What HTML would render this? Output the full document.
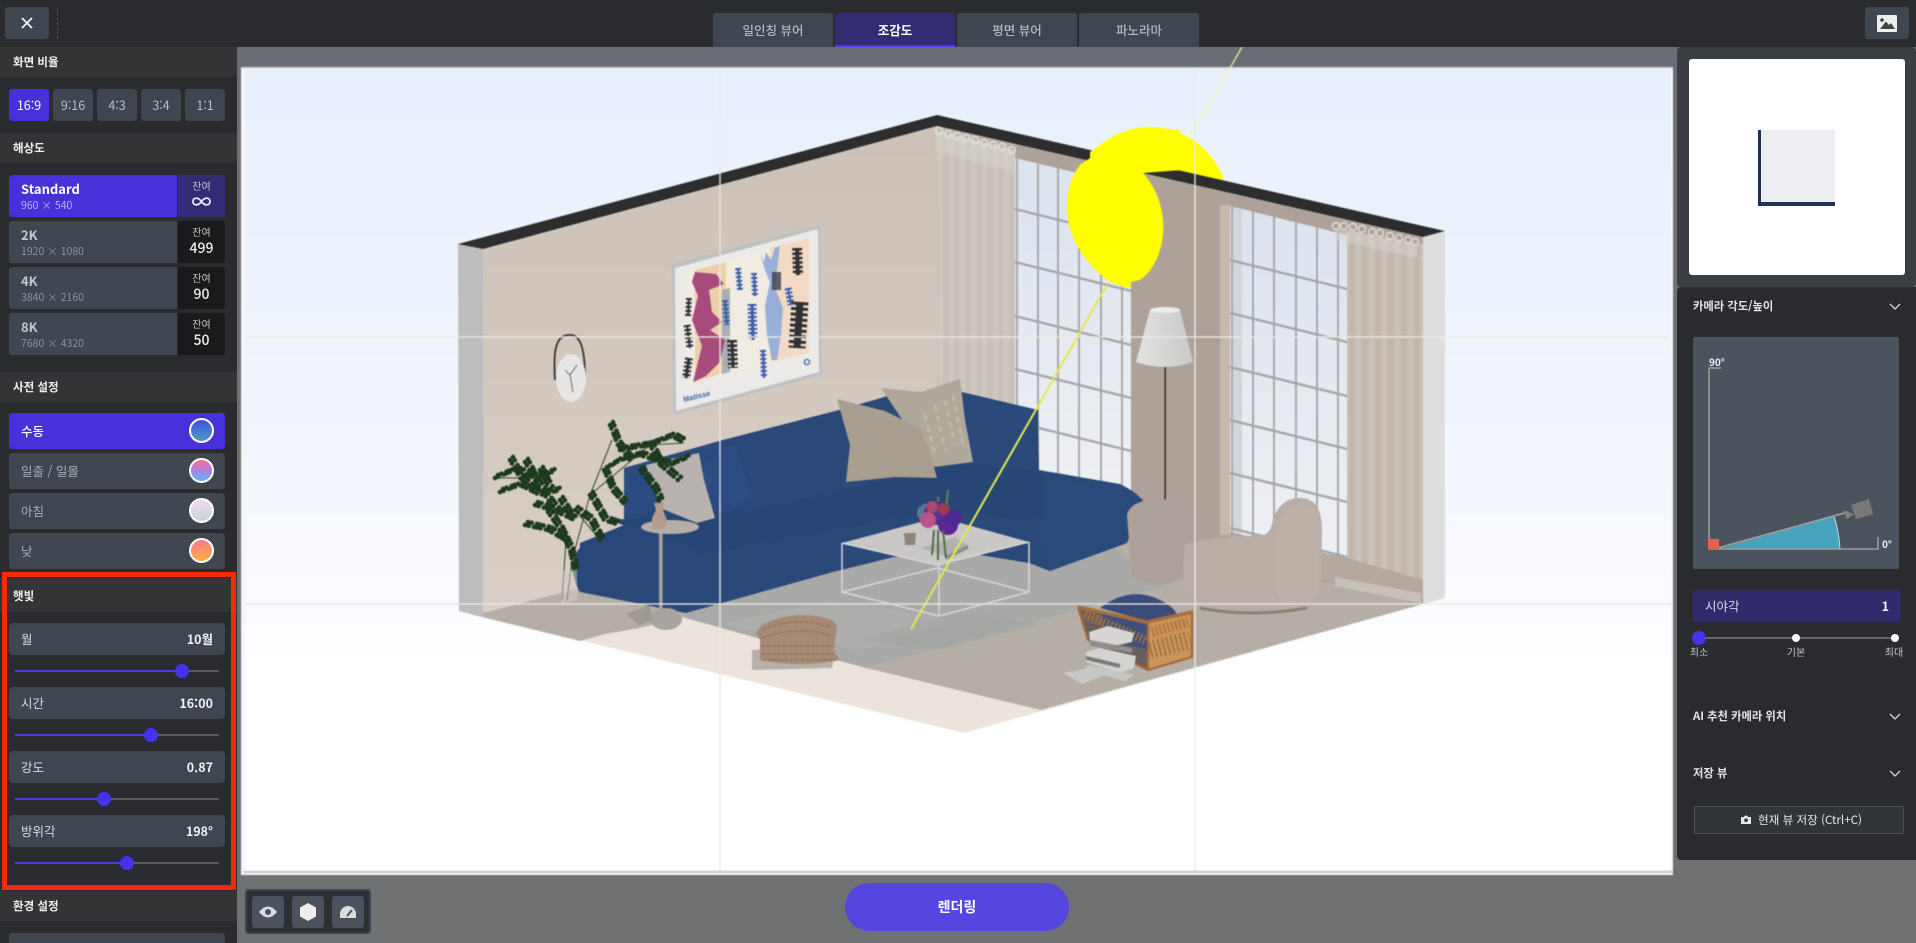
<!DOCTYPE html>
<html lang="ko">
<head>
<meta charset="utf-8">
<title>렌더링</title>
<style>
*{box-sizing:border-box}
html,body{margin:0;padding:0;width:1916px;height:943px;overflow:hidden;background:#6e7073}
body{font-family:"Noto Sans CJK KR","Liberation Sans",sans-serif;position:relative;color:#fff}
.a{position:absolute}
.btn{position:absolute;background:#3f4650;border-radius:3px;display:flex;align-items:center;justify-content:center}
.hd{position:absolute;left:0;width:237px;height:30px;background:#333436;font-size:11.5px;font-weight:700;color:#eee;line-height:30px;padding-left:13px}
.ratio{position:absolute;top:89px;width:40px;height:32px;background:#3f4650;border-radius:3px;color:#b9bdc3;font-size:12.5px;line-height:32px;text-align:center}
.on{background:#4632d8;color:#fff}
.resl{position:absolute;left:9px;width:168px;height:42px;background:#3f4650;border-radius:3px 0 0 3px;padding:5px 0 0 12px}
.resl b{display:block;font-size:13px;line-height:17px;color:#c3c6cb;font-weight:700}
.resl span{display:block;font-size:10.5px;line-height:17px;color:#8d929a}
.resr{position:absolute;left:178px;width:47px;height:42px;background:#191a1c;border-radius:0 3px 3px 0;text-align:center}
.resr i{display:block;font-style:normal;font-size:10px;line-height:12px;padding-top:5px;color:#c2c4c8}
.resr b{display:block;font-weight:500;font-size:14px;line-height:20px;color:#eee}
.pre{position:absolute;left:9px;width:216px;height:36px;background:#3f4650;border-radius:3px;font-size:12.5px;line-height:36px;padding-left:12px;color:#a9adb3}
.pre u{position:absolute;left:180px;top:5px;width:25px;height:25px;border-radius:50%;border:2px solid #fff;text-decoration:none}
.row{position:absolute;left:9px;width:216px;height:32px;background:#3f4650;border-radius:4px;font-size:12.5px;line-height:32px;padding:0 12px;color:#d8dade;display:flex;justify-content:space-between}
.row b{font-size:12.5px;color:#f2f2f2}
.tr{position:absolute;left:15px;width:204px;height:2px;background:#5a5a5a}
.tr i{position:absolute;left:0;top:0;height:2px;background:#4a3de0}
.tr s{position:absolute;top:-6px;width:14px;height:14px;margin-left:-7px;border-radius:50%;background:#4433ee}
.tab{position:absolute;top:13px;width:120px;height:34px;background:#3f4650;border-radius:3px 3px 0 0;font-size:12.5px;font-weight:500;line-height:33px;text-align:center;color:#b4b8be}
.rh{position:absolute;left:1693px;font-size:11.3px;font-weight:700;color:#e3e3e3;line-height:16px}
.lb{position:absolute;top:645px;font-size:10px;line-height:14px;color:#c6c6c6;text-align:center;width:40px}
.tb{position:absolute;top:896px;width:32px;height:32px;background:#4b525e;border-radius:3px}
</style>
</head>
<body>
<!-- canvas background -->
<div class="a" style="left:237px;top:47px;width:1679px;height:896px;background:linear-gradient(#696c74,#6f7173 120px)"></div>

<!-- scene -->
<svg class="a" style="left:0;top:0;filter:blur(.45px)" width="1916" height="943" viewBox="0 0 1916 943" xmlns="http://www.w3.org/2000/svg">
<defs>
<linearGradient id="sky" x1="0" y1="0" x2="0" y2="1"><stop offset="0" stop-color="#e8f0fd"/><stop offset=".45" stop-color="#f2f6fe"/><stop offset=".68" stop-color="#fbfcff"/><stop offset=".74" stop-color="#fff"/></linearGradient>
<linearGradient id="wl" x1="0" y1="0" x2="0" y2="1"><stop offset="0" stop-color="#cdc2b8"/><stop offset="1" stop-color="#d9cfc6"/></linearGradient>
<linearGradient id="gl" x1="0" y1="0" x2="0" y2="1"><stop offset="0" stop-color="#dbe3ef"/><stop offset="1" stop-color="#eff0f4"/></linearGradient>
<linearGradient id="cur" gradientUnits="userSpaceOnUse" x1="0" y1="0" x2="13" y2="0" spreadMethod="repeat"><stop offset="0" stop-color="#c0b4a9"/><stop offset=".5" stop-color="#cdc4bb"/><stop offset="1" stop-color="#c0b4a9"/></linearGradient>
<linearGradient id="cur2" gradientUnits="userSpaceOnUse" x1="0" y1="0" x2="11" y2="0" spreadMethod="repeat"><stop offset="0" stop-color="#c9c2b9"/><stop offset=".5" stop-color="#d3cec7"/><stop offset="1" stop-color="#c9c2b9"/></linearGradient>
<linearGradient id="shade" x1="0" y1="0" x2="1" y2="0"><stop offset="0" stop-color="#e2e2e0"/><stop offset="1" stop-color="#c9c9c7"/></linearGradient>
<clipPath id="w1"><polygon points="1015,158 1131,186 1131,500 1015,480"/></clipPath>
<clipPath id="w2"><polygon points="1230,206 1347,235 1347,560 1230,535"/></clipPath>
</defs>

<rect x="241" y="67" width="1432" height="808" fill="#f4f6fb"/>
<rect x="245" y="70" width="1426" height="800" fill="url(#sky)"/>
<rect x="241" y="67" width="1432" height="2" fill="#d5dbe3"/>
<rect x="243" y="871" width="1430" height="2" fill="#c9c9c9"/>

<!-- yellow line, upper sky portion -->
<path d="M1242,47 L1192,135" stroke="#f7f7a0" stroke-width="1.3" opacity=".9"/>

<!-- sun dome (behind walls) -->
<circle cx="1150" cy="205" r="78" fill="#ffff00"/>

<!-- floor -->
<polygon points="459,611 964,733 1445,598 937,497" fill="#ece4dc"/>
<polygon points="482,613 937,497 1423,604 1445,598 1041,710 866,668 682,617 640,628 605,634 580,641 470,614" fill="#b5aea7"/>
<polygon points="682,617 866,668 1085,608 1170,585 1100,540 800,560" fill="#a9aaa8"/>
<polygon points="720,625 860,650 960,620 830,600" fill="#b0b1af" opacity=".6"/>
<polygon points="860,640 960,610 1040,625 940,650" fill="#a2a3a1" opacity=".5"/>

<!-- walls -->
<polygon points="483,249 937,126 937,497 483,613" fill="url(#wl)"/>
<polygon points="937,126 1423,237 1423,604 937,497" fill="#aea199"/>
<polygon points="458,244 483,249 483,617 459,611" fill="#bdbdbd"/>
<polygon points="1423,237 1445,231 1445,598 1423,604" fill="#dedede"/>
<polygon points="458,244 937,115 1445,231 1423,237 937,126 483,249" fill="#2d2d2d"/>
<polygon points="937,126 1015,144 1015,158 937,140" fill="#bdb1a7"/>

<!-- window 1 -->
<g clip-path="url(#w1)">
<rect x="1015" y="150" width="116" height="350" fill="url(#gl)"/>
<g stroke="#a9a9a9" stroke-width="2">
<path d="M1017 150V500M1038 150V500M1058 150V500M1079 150V500M1101 150V500M1122 150V500"/>
</g>
<g stroke="#a6a6a8" stroke-width="2.4">
<path d="M1015 209L1131 238M1015 262L1131 291M1015 316L1131 345M1015 369L1131 398M1015 422L1131 451M1015 475L1131 504"/>
</g>
</g>
<!-- window 2 -->
<rect x="1220" y="205" width="10" height="330" fill="#c5b8ac"/>
<g clip-path="url(#w2)">
<rect x="1230" y="200" width="117" height="360" fill="url(#gl)"/>
<rect x="1232" y="206" width="10" height="330" fill="#d2d6db"/>
<g stroke="#a9a9a9" stroke-width="2">
<path d="M1232 200V560M1253 200V560M1274 200V560M1296 200V560M1317 200V560M1338 200V560"/>
</g>
<g stroke="#a6a6a8" stroke-width="2.4">
<path d="M1230 260L1347 289M1230 313L1347 342M1230 367L1347 396M1230 420L1347 449M1230 473L1347 502M1230 528L1347 557"/>
</g>
</g>
<!-- curtains -->
<polygon points="936,130 1015,150 1015,500 936,480" fill="url(#cur2)" opacity=".92"/>
<polygon points="936,130 1015,150 1015,172 936,152" fill="#d9d6d2" opacity=".35"/>
<polygon points="1347,230 1423,244 1423,604 1347,586" fill="url(#cur)"/>
<polygon points="1335,228 1417,246 1417,258 1335,240" fill="#d9d6d2" opacity=".45"/>
<polygon points="1230,532 1347,558 1423,580 1423,604 1347,585 1230,560" fill="#b4a89f"/>
<polygon points="1335,577 1421,593 1421,603 1335,586" fill="#d9d6d2" opacity=".5"/>
<g fill="none" stroke="#e6e4e0" stroke-width="1.4" opacity=".9">
<circle cx="1336" cy="226" r="3.5"/><circle cx="1344" cy="226" r="3.5"/><circle cx="1353" cy="227" r="3.5"/><circle cx="1362" cy="229" r="3.5"/><circle cx="1372" cy="232" r="3.5"/><circle cx="1380" cy="233" r="3.5"/><circle cx="1390" cy="236" r="3.5"/><circle cx="1399" cy="238" r="3.5"/><circle cx="1408" cy="240" r="3.5"/><circle cx="1415" cy="242" r="3.5"/>
<circle cx="939" cy="131" r="3.5"/><circle cx="948" cy="134" r="3.5"/><circle cx="957" cy="136" r="3.5"/><circle cx="966" cy="138" r="3.5"/><circle cx="975" cy="140" r="3.5"/><circle cx="984" cy="143" r="3.5"/><circle cx="993" cy="145" r="3.5"/><circle cx="1002" cy="147" r="3.5"/><circle cx="1012" cy="150" r="3.5"/>
</g>

<!-- sun ellipse, over window -->
<path d="M1143,173 C1158,190 1165,212 1163,235 C1161,255 1152,272 1140,280 L1131,282 L1131,288 C1122,287 1114,284 1107,280 C1085,262 1067,238 1067,207 C1067,190 1072,175 1080,165 L1090,158 L1090,152 L1100,145 L1120,133 L1143,127 L1180,130 L1182,170 Z" fill="#ffff00"/>

<!-- lamp -->
<rect x="1164.4" y="366" width="1.6" height="140" fill="#3d2c25"/>
<path d="M1150,310 Q1165,306 1180,310 L1193,362 Q1165,372 1136,362 Z" fill="url(#shade)"/>
<ellipse cx="1165" cy="310" rx="15" ry="3" fill="#ececec"/>

<!-- poster -->
<polygon points="672,264 820,225 822,375 673,415" fill="#bfc0c0"/>
<polygon points="675,268 818,229 819,372 676,411" fill="#ebeae8"/>
<polygon points="684,271 809,238 809,353 685,385" fill="#f1ebe1"/>
<polygon points="695,270 726,262 726,372 695,382" fill="#ecd0aa"/>
<polygon points="770,248 809,238 809,353 770,362" fill="#f3dac5"/>
<polygon points="722,290 730,288 730,372 722,374" fill="#a9b0b5"/>
<path d="M695,272 L716,274 L724,284 L709,290 L712,312 L722,322 L710,330 L725,340 L720,362 L706,376 L693,382 L702,346 L692,320 L698,296 L692,282 Z" fill="#a94a7c"/>
<path d="M760,253 L764,262 L766,252 L771,260 L775,248 L780,246 L777,270 L775,288 L783,308 L781,335 L777,360 L772,360 L767,335 L765,306 L770,282 L765,270 Z" fill="#98afd9"/>
<rect x="772" y="272" width="9" height="18" fill="#3a3f4a" opacity=".8"/>
<g fill="none" stroke="#2f3135">
<path d="M797,248 L798,275" stroke-width="4"/><path d="M797,248 L798,275" stroke-width="10" stroke-dasharray="2.5 2"/>
<path d="M800,302 L797,348" stroke-width="7"/><path d="M800,302 L797,348" stroke-width="17" stroke-dasharray="3 2.5"/>
<path d="M732,340 L733,368" stroke-width="3"/><path d="M732,340 L733,368" stroke-width="10" stroke-dasharray="2.5 2"/>
<path d="M687,325 L690,348" stroke-width="2"/><path d="M687,325 L690,348" stroke-width="7" stroke-dasharray="2 2"/>
<path d="M689,358 L686,378" stroke-width="3"/><path d="M689,358 L686,378" stroke-width="8" stroke-dasharray="2 2"/>
<path d="M688,316 L689,298" stroke-width="2"/><path d="M688,316 L689,298" stroke-width="6" stroke-dasharray="2 2"/>
</g>
<g fill="none" stroke="#3d5fa8">
<path d="M738,268 L740,290" stroke-width="2"/><path d="M738,268 L740,290" stroke-width="6" stroke-dasharray="2 2"/>
<path d="M754,273 L755,296" stroke-width="2"/><path d="M754,273 L755,296" stroke-width="6" stroke-dasharray="2 2"/>
<path d="M752,304 L753,340" stroke-width="3"/><path d="M752,304 L753,340" stroke-width="9" stroke-dasharray="2 2"/>
<path d="M725,300 L727,325" stroke-width="2"/><path d="M725,300 L727,325" stroke-width="6" stroke-dasharray="2 2"/>
<path d="M763,350 L764,378" stroke-width="2"/><path d="M763,350 L764,378" stroke-width="6" stroke-dasharray="2 2"/>
<path d="M788,288 L791,305" stroke-width="2"/><path d="M788,288 L791,305" stroke-width="7" stroke-dasharray="2 2"/>
</g>
<text x="0" y="0" transform="translate(684,402) rotate(-14)" font-size="7.5" font-weight="700" fill="#3d66a8" font-family="Liberation Sans,sans-serif">Matisse</text>
<circle cx="807" cy="362" r="2.6" fill="none" stroke="#4b72ad" stroke-width="1.4"/>

<!-- clock -->
<path d="M555,380 C553,350 556,336 568,335 C581,333 585,350 585,378" fill="none" stroke="#3a3230" stroke-width="1.8"/>
<ellipse cx="571" cy="378" rx="15" ry="24" fill="#e8e6e4"/>
<path d="M570,375 L565,370 M570,375 L577,365 M570,375 L573,392" stroke="#555" stroke-width=".8" fill="none"/>

<!-- sofa -->
<path d="M624,468 L723,440 L839,410 L881,398 L900,392 L962,392 L1038,410 L1039,470 L1120,484 Q1140,494 1143,502 L1127,543 L1050,571 L1029,563 L980,555 L894,557 L833,572 L686,613 L580,592 Q570,575 574,558 Q578,546 590,541 L624,525 Z" fill="#2a4878"/>
<path d="M624,468 L723,440 L745,500 L723,520 L700,488 L624,525 Z" fill="#2b4b80"/>
<path d="M702,470 Q722,445 735,445 L752,495 L735,506 L702,498 Z" fill="#2d4d84" opacity=".8"/>
<path d="M752,510 L960,465 L1039,470 L1043,480 L1127,488 L1143,500 L1030,520 L940,510 L833,530 L700,555 L610,520 Z" fill="#274676"/>
<path d="M580,543 L624,525 L700,550 L686,613 L578,590 Z" fill="#294879"/>
<path d="M1043,480 L1120,486 L1143,500 L1127,543 L1050,571 L1043,540 Z" fill="#2b4a7c"/>

<!-- left pillow -->
<path d="M646,465 L675,458 L699,453 L704,480 L715,518 L697,523 L660,508 Z" fill="#b8b3ae"/>

<!-- pillows -->
<path d="M881,388 L921,392 L960,379 L965,420 L973,462 L934,467 Z" fill="#b0a89b"/>
<g stroke="#c4bdb0" stroke-width="2.4" stroke-dasharray="6 5" fill="none" opacity=".9">
<path d="M925,415 L935,455"/><path d="M935,405 L945,450"/><path d="M945,400 L955,445"/><path d="M953,395 L963,445"/>
</g>
<path d="M837,399 L885,411 L920,428 L929,450 L937,478 L895,477 L846,482 L850,445 Z" fill="#a99f90"/>

<!-- side table -->
<rect x="659" y="530" width="3.6" height="82" fill="#a8a29c"/>
<ellipse cx="670" cy="527" rx="29" ry="7" fill="#b3aea7"/>
<path d="M654,503 L664,502 L663,510 L667,520 L665,529 L652,529 L652,518 L656,510 Z" fill="#b39b8e"/>
<ellipse cx="666" cy="619" rx="16" ry="11" fill="#a8a5a0"/>
<polygon points="626,614 650,605 652,620 640,625" fill="#8f8a85" opacity=".6"/>

<!-- coffee table -->
<polygon points="842,543 939,517 1029,542 937,565" fill="#c9c8c7"/>
<g fill="none" stroke="#d8d8d8" stroke-width="1.5">
<path d="M842,543 L937,565 L1029,542"/><path d="M842,543 V592 L937,568"/><path d="M1029,542 V592 L939,616 V565"/><path d="M842,592 L939,616"/><path d="M937,568 L1029,592"/>
</g>
<path d="M904,533 h12 l-1,12 h-10 z" fill="#8f8478"/>
<polygon points="921,548 955,537 968,545 945,556" fill="#b1b1b1"/>
<polygon points="945,556 968,545 968,549 946,560" fill="#8f8f8f"/>
<path d="M940,520 L938,497 M945,520 L948,490" stroke="#5a8a4a" stroke-width="2" fill="none"/>
<ellipse cx="930" cy="513" rx="13" ry="10" fill="#6d8ea1" opacity=".7"/>
<circle cx="936" cy="513" r="12" fill="#5a2f90"/><circle cx="948" cy="525" r="10" fill="#5b2790"/><circle cx="928" cy="520" r="8" fill="#b9558a"/><circle cx="932" cy="507" r="6" fill="#a44a68"/><circle cx="944" cy="509" r="6" fill="#9c3a55"/><circle cx="954" cy="518" r="8" fill="#4d2a92"/>
<path d="M938,530 L938,560 M943,530 L946,558 M934,530 L932,555" stroke="#556b48" stroke-width="2" fill="none"/>

<!-- plant -->
<g fill="none" stroke="#3d4f32" stroke-width="1.1">
<path d="M567,600 L572,560 L590,495 L612,440"/><path d="M562,600 L566,540 L540,470"/>
<path d="M495,478 L535,478 L552,472M510,460 L533,490M590,495 L650,445 L684,443M605,472 L625,505M575,510 L600,540"/>
</g>
<g id="leaves" fill="none" stroke="#1e3a1e" stroke-width="4.6" stroke-linecap="round" stroke-dasharray=".1 3.6 .1 5.4 .1 2.8">
<path d="M495,478 L515,470 L535,478 L552,472"/>
<path d="M500,492 L520,485 L540,495 L560,490"/>
<path d="M510,460 L520,478 L533,490"/>
<path d="M525,462 L535,480 L548,500 L560,515"/>
<path d="M540,470 L550,490"/>
<path d="M535,505 L552,510 L575,520"/>
<path d="M525,525 L548,530 L565,540"/>
<path d="M548,512 L560,530 L570,550 L575,575"/>
<path d="M560,500 L572,520"/>
<path d="M610,425 L618,445 L630,460"/>
<path d="M604,470 L620,460 L640,455"/>
<path d="M620,450 L650,445 L672,436 L684,443"/>
<path d="M650,445 L660,465 L678,480"/>
<path d="M640,455 L670,465 L686,458"/>
<path d="M605,472 L612,490 L625,505"/>
<path d="M590,495 L604,520 L620,525"/>
<path d="M575,510 L590,520 L600,540"/>
<path d="M640,470 L655,490 L660,503"/>
</g>
<use href="#leaves" transform="translate(3,-3)"/>
<polygon points="561,570 577,570 577,600 561,604" fill="#d6cfc7" opacity=".5"/>

<!-- floor cushion -->
<polygon points="752,650 836,645 832,668 752,670" fill="#9f9994" opacity=".7"/>
<path d="M762,625 Q795,608 832,620 Q838,624 837,630 L833,650 L840,660 Q800,668 760,660 L760,640 L756,632 Z" fill="#a68a74"/>
<g stroke="#8f7560" stroke-width="1.5" fill="none" stroke-dasharray="4 1.5">
<path d="M762,630 Q797,615 832,628"/><path d="M761,638 Q797,625 833,636"/><path d="M761,646 H833"/><path d="M761,654 H834"/><path d="M762,660 H836"/>
</g>

<!-- ottoman -->
<path d="M1127,515 Q1130,500 1160,499 Q1190,500 1192,515 L1188,575 Q1162,592 1132,578 Z" fill="#aca29b"/>
<!-- armchair -->
<path d="M1185,545 Q1200,538 1262,535 Q1270,535 1273,520 Q1280,498 1300,498 Q1322,498 1322,530 L1321,590 Q1316,606 1300,606 L1200,606 Q1184,600 1183,570 Z" fill="#b9ada5"/>
<path d="M1278,530 Q1285,505 1302,503 Q1320,505 1320,530 L1319,590 Q1314,604 1298,604 L1282,604 Q1268,570 1278,530 Z" fill="#bdb1a9"/>
<path d="M1200,608 Q1250,618 1307,608" stroke="#8c8172" stroke-width="3" fill="none"/>

<!-- basket -->
<polygon points="1078,607 1147,622 1148,670 1088,640" fill="#6b5f5c"/>
<polygon points="1147,622 1193,612 1192,657 1148,670" fill="#c9965a"/>
<polygon points="1100,612 1147,625 1148,650 1110,640" fill="#3f5179"/>
<path d="M1100,608 Q1130,585 1160,600 Q1176,608 1177,616 L1147,621 Z" fill="#3a4d78"/>
<path d="M1078,607 L1147,622 L1193,612" stroke="#aa6c3a" stroke-width="3.5" fill="none"/>
<path d="M1088,640 L1148,670 L1192,657 V612 M1148,622 V670 M1078,607 L1088,640" stroke="#a9683a" stroke-width="2.2" fill="none"/>
<path d="M1085,614 L1145,640" stroke="#b5743e" stroke-width="9" stroke-dasharray="1.5 2.5" fill="none"/>
<path d="M1152,632 L1188,622" stroke="#b5743e" stroke-width="10" stroke-dasharray="2 2" fill="none"/>
<path d="M1150,650 L1190,640" stroke="#8e5a32" stroke-width="18" stroke-dasharray="1.5 3" fill="none" opacity=".7"/>
<!-- books -->
<g>
<polygon points="1089,632 1108,626 1134,633 1132,642 1110,647 1090,641" fill="#d7d6d4"/>
<polygon points="1090,640 1132,648 1132,653 1090,646" fill="#8e8e8e"/>
<polygon points="1086,652 1100,648 1136,656 1134,668 1120,673 1086,662" fill="#d3d3d2"/>
<polygon points="1086,656 1120,664 1120,668 1086,660" fill="#7a7a7a"/>
<polygon points="1088,665 1135,675 1125,681 1084,670" fill="#c6c6c5"/>
<polygon points="1063,673 1090,668 1105,675 1082,684" fill="#c8c8c6"/>
</g>

<!-- yellow line -->
<path d="M911,629 L1107,285" stroke="#e5e84a" stroke-width="2"/>

<!-- grid -->
<g stroke="#ebe9e7" stroke-width="1.5" opacity=".9">
<path d="M720,68V871"/><path d="M1195,68V871"/>
<path d="M245,337H1671"/><path d="M245,604H1671"/>
</g>
</svg>

<!-- top bar -->
<div class="a" style="left:0;top:0;width:1916px;height:47px;background:#2a2b2e"></div>
<div class="btn" style="left:5px;top:7px;width:44px;height:32px">
<svg width="14" height="14" viewBox="0 0 14 14"><path d="M2 2L12 12M12 2L2 12" stroke="#f2f2f2" stroke-width="1.8" fill="none"/></svg></div>
<div class="a" style="left:57px;top:8px;height:31px;width:0;border-left:1px dashed #4c4e52"></div>

<div class="tab" style="left:713px">일인칭 뷰어</div>
<div class="tab" style="left:835px;background:#342c72;color:#fff;border-bottom:2px solid #4a3df0;font-weight:700">조감도</div>
<div class="tab" style="left:957px">평면 뷰어</div>
<div class="tab" style="left:1079px">파노라마</div>

<div class="btn" style="left:1865px;top:7px;width:44px;height:32px">
<svg width="20" height="17" viewBox="0 0 20 17"><rect width="20" height="17" rx="1" fill="#eee"/><circle cx="5" cy="5" r="1.8" fill="#3f4650"/><path d="M3 14L9 6.5L12 10L14 8L18 14Z" fill="#3f4650"/></svg></div>

<!-- left sidebar -->
<div class="a" style="left:0;top:47px;width:237px;height:896px;background:#2a2b2e"></div>
<div class="hd" style="top:47px">화면 비율</div>
<div class="ratio on" style="left:9px">16:9</div>
<div class="ratio" style="left:53px">9:16</div>
<div class="ratio" style="left:97px">4:3</div>
<div class="ratio" style="left:141px">3:4</div>
<div class="ratio" style="left:185px">1:1</div>

<div class="hd" style="top:133px">해상도</div>
<div class="resl on" style="top:175px;background:#4632d8"><b style="color:#fff">Standard</b><span style="color:#b9b3ee">960 × 540</span></div>
<div class="resr" style="top:175px;background:#332c74"><i>잔여</i><b style="font-size:20px;line-height:18px">∞</b></div>
<div class="resl" style="top:221px"><b>2K</b><span>1920 × 1080</span></div>
<div class="resr" style="top:221px"><i>잔여</i><b>499</b></div>
<div class="resl" style="top:267px"><b>4K</b><span>3840 × 2160</span></div>
<div class="resr" style="top:267px"><i>잔여</i><b>90</b></div>
<div class="resl" style="top:313px"><b>8K</b><span>7680 × 4320</span></div>
<div class="resr" style="top:313px"><i>잔여</i><b>50</b></div>

<div class="hd" style="top:372px">사전 설정</div>
<div class="pre" style="top:413px;background:#4632d8;color:#fff;font-weight:500">수동<u style="background:linear-gradient(#3f4fe0,#4f9cc0)"></u></div>
<div class="pre" style="top:453px">일출 / 일몰<u style="background:linear-gradient(#f2709a,#b07fe0 50%,#5cb8f5)"></u></div>
<div class="pre" style="top:493px">아침<u style="background:linear-gradient(#f0dce6,#c9d3de)"></u></div>
<div class="pre" style="top:533px">낮<u style="background:linear-gradient(#f97a92,#fbb13c)"></u></div>

<div class="hd" style="top:578px;height:34px;line-height:36px">햇빛</div>
<div class="row" style="top:623px"><span>월</span><b>10월</b></div>
<div class="tr" style="top:670px"><i style="width:167px"></i><s style="left:167px"></s></div>
<div class="row" style="top:687px"><span>시간</span><b>16:00</b></div>
<div class="tr" style="top:734px"><i style="width:136px"></i><s style="left:136px"></s></div>
<div class="row" style="top:751px"><span>강도</span><b>0.87</b></div>
<div class="tr" style="top:798px"><i style="width:89px"></i><s style="left:89px"></s></div>
<div class="row" style="top:815px"><span>방위각</span><b>198°</b></div>
<div class="tr" style="top:862px"><i style="width:112px"></i><s style="left:112px"></s></div>

<div class="a" style="left:2px;top:572px;width:234px;height:318px;border:5.5px solid #f32b06"></div>

<div class="hd" style="top:891px">환경 설정</div>
<div class="a" style="left:9px;top:933px;width:216px;height:10px;background:#3f4650;border-radius:3px 3px 0 0"></div>

<!-- bottom tools -->
<div class="a" style="left:245px;top:889px;width:126px;height:45px;background:#2c3035;border:2px solid #3f4650;border-radius:4px"></div>
<div class="tb" style="left:252px"><svg width="32" height="32" viewBox="0 0 32 32"><path d="M7 16Q16 5 25 16Q16 27 7 16Z" fill="#dcdcdc"/><circle cx="16" cy="16" r="3" fill="#4b525e"/></svg></div>
<div class="tb" style="left:292px"><svg width="32" height="32" viewBox="0 0 32 32"><path d="M16 7L24 11.5V20.5L16 25L8 20.5V11.5Z" fill="#ececec"/></svg></div>
<div class="tb" style="left:332px"><svg width="32" height="32" viewBox="0 0 32 32"><path d="M8 22V18A8 8 0 0 1 24 18V22Z" fill="#dcdcdc"/><path d="M15 20L20 14" stroke="#4b525e" stroke-width="2"/></svg></div>

<div class="a" style="left:845px;top:883px;width:224px;height:48px;border-radius:24px;background:#5546e0;font-size:14px;font-weight:700;line-height:48px;text-align:center">렌더링</div>

<!-- right panel -->
<div class="a" style="left:1677px;top:47px;width:239px;height:240px;background:#3a3d42;border-radius:4px"></div>
<div class="a" style="left:1689px;top:59px;width:216px;height:216px;background:#fff;border-radius:3px"></div>
<div class="a" style="left:1759px;top:130px;width:76px;height:75px;background:#eceef2"></div>
<div class="a" style="left:1758px;top:130px;width:3px;height:75px;background:#1f3553"></div>
<div class="a" style="left:1758px;top:202px;width:77px;height:4px;background:#1f3553"></div>

<div class="a" style="left:1677px;top:287px;width:239px;height:573px;background:#2a2b2e;border-radius:4px 0 0 4px"></div>
<div class="rh" style="top:298px">카메라 각도/높이</div>
<svg class="a" style="left:1889px;top:303px" width="12" height="7" viewBox="0 0 12 7"><path d="M1 1L6 6L11 1" stroke="#d6d6d6" stroke-width="1.3" fill="none"/></svg>

<div class="a" style="left:1693px;top:337px;width:206px;height:232px;background:#4b535e;border-radius:2px"></div>
<svg class="a" style="left:1693px;top:337px" width="206" height="232" viewBox="1693 337 206 232">
<path d="M1719,549 L1834,516 Q1839,532 1840,549 Z" fill="#47a3bd"/>
<path d="M1834,516 Q1839,532 1840,549" stroke="#c8d6dc" stroke-width="1" fill="none"/>
<path d="M1721,368H1709V549H1878V537" stroke="#9b9b9b" stroke-width="1.6" fill="none"/>
<path d="M1718,548L1848,512" stroke="#9b9b9b" stroke-width="1.8"/>
<polygon points="1843,510 1854,514 1847,519" fill="#808080"/>
<polygon points="1851,505 1869,499 1873,514 1856,519" fill="#787878"/>
<rect x="1708" y="539" width="11" height="11" fill="#e0634a"/>
<text x="1709" y="366" font-size="10" font-weight="700" fill="#eee" font-family="Noto Sans CJK KR,Liberation Sans,sans-serif">90°</text>
<text x="1882" y="548" font-size="10" font-weight="700" fill="#eee" font-family="Noto Sans CJK KR,Liberation Sans,sans-serif">0°</text>
</svg>

<div class="a" style="left:1693px;top:590px;width:208px;height:32px;background:#322b6b;border-radius:3px;display:flex;justify-content:space-between;padding:0 12px;font-size:12.5px;line-height:31px;color:#d8d8e8"><span>시야각</span><b style="color:#f0f0f0">1</b></div>
<div class="a" style="left:1699px;top:637px;width:196px;height:2px;background:#666"></div>
<div class="a" style="left:1692px;top:631px;width:14px;height:14px;border-radius:50%;background:#4433ee"></div>
<div class="a" style="left:1792px;top:634px;width:8px;height:8px;border-radius:50%;background:#fff"></div>
<div class="a" style="left:1891px;top:634px;width:8px;height:8px;border-radius:50%;background:#fff"></div>
<div class="lb" style="left:1679px">최소</div>
<div class="lb" style="left:1776px">기본</div>
<div class="lb" style="left:1874px">최대</div>

<div class="rh" style="top:708px">AI 추천 카메라 위치</div>
<svg class="a" style="left:1889px;top:713px" width="12" height="7" viewBox="0 0 12 7"><path d="M1 1L6 6L11 1" stroke="#d6d6d6" stroke-width="1.3" fill="none"/></svg>
<div class="rh" style="top:765px">저장 뷰</div>
<svg class="a" style="left:1889px;top:770px" width="12" height="7" viewBox="0 0 12 7"><path d="M1 1L6 6L11 1" stroke="#d6d6d6" stroke-width="1.3" fill="none"/></svg>

<div class="a" style="left:1694px;top:806px;width:210px;height:28px;background:#31353a;border:1px solid #4c4f54;border-radius:2px;font-size:11.6px;line-height:26px;color:#e6e6e6;padding-left:63px;white-space:nowrap">현재 뷰 저장 (Ctrl+C)</div>
<svg class="a" style="left:1741px;top:815px" width="10" height="9" viewBox="0 0 10 9"><path d="M0 2H3L3.6 0.6H6.4L7 2H10V9H0Z" fill="#e6e6e6"/><circle cx="5" cy="5.2" r="1.8" fill="#31353a"/></svg>
</body>
</html>
